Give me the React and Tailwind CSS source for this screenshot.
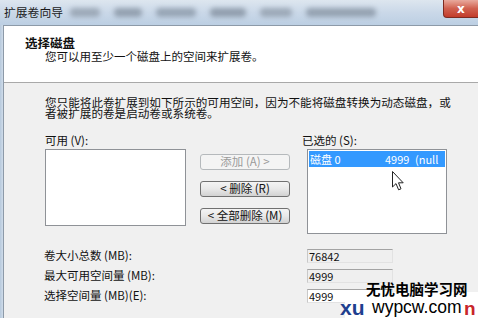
import React from "react";

const cjk = { fontFamily: '"Noto Sans CJK SC", "Noto Sans", sans-serif' };

function WinButton({ children, disabled }) {
  return (
    <div
      className={`h-[16px] w-[90px] flex items-center justify-center rounded-[3px] border text-[11.5px] leading-none ${
        disabled
          ? "border-[#b5b9bc] bg-[#f4f4f4] text-[#9a9a9a]"
          : "border-[#707070] bg-gradient-to-b from-[#f4f4f4] via-[#e8e8e8] to-[#d2d2d2] text-[#111]"
      }`}
    >
      {children}
    </div>
  );
}

function ReadBox({ value, editable }) {
  return (
    <div
      className={`h-[14px] w-[86px] border border-t-[#a3a3a3] border-l-[#c8c8c8] border-r-[#e2e2e2] border-b-[#e2e2e2] pl-[1px] text-[11px] leading-[12px] text-[#111] ${
        editable ? "bg-white" : "bg-[#efefef]"
      }`}
    >
      {value}
    </div>
  );
}

function Cursor() {
  return (
    <svg
      className="absolute left-[392px] top-[171px]"
      width="13"
      height="20"
      viewBox="0 0 13 20"
    >
      <path
        d="M0.5 0.5 L0.5 16 L4 12.6 L6.6 18.8 L9 17.8 L6.5 11.8 L11.2 11.8 Z"
        fill="white"
        stroke="#222"
        strokeWidth="1"
        strokeLinejoin="round"
      />
    </svg>
  );
}

export default function App() {
  return (
    <div
      className="relative w-[478px] h-[318px] overflow-hidden bg-[#c3d4e6] text-[#111]"
      style={cjk}
    >
      {/* title bar */}
      <div className="relative h-[25px] bg-gradient-to-b from-[#dde6ef] via-[#cad8e8] to-[#bccfe3] overflow-hidden">
        <div className="absolute left-[70px] top-[8px] h-[9px] w-[360px] flex gap-[14px] blur-[2.5px] opacity-70">
          <div className="h-full w-[30px] bg-[#8a96a4] rounded" />
          <div className="h-full w-[28px] bg-[#7d8a99] rounded" />
          <div className="h-full w-[40px] bg-[#8290a0] rounded" />
          <div className="h-full w-[36px] bg-[#7a8796] rounded" />
          <div className="h-full w-[32px] bg-[#8a96a4] rounded" />
          <div className="h-full w-[70px] bg-[#7f8c9b] rounded" />
        </div>
        <div className="absolute left-[4px] top-[4px] text-[11.8px] leading-[16px] text-[#1b1b1b]">
          扩展卷向导
        </div>
        <div className="absolute left-[443px] top-0 h-[18px] w-[40px] rounded-bl-[4px] border border-t-0 border-[#7d2a20] bg-gradient-to-b from-[#e8a99d] via-[#d0604f] to-[#c23b2a] flex items-center pl-[13px]">
          <span className="text-white font-bold text-[12px] leading-none" style={{ fontFamily: '"DejaVu Sans", sans-serif' }}>
            x
          </span>
        </div>
      </div>

      {/* window body */}
      <div className="flex h-[293px]">
        <div className="w-[3px] bg-gradient-to-r from-[#b7c9dc] to-[#cfdcea]" />
        <div className="flex-1 flex flex-col border-l border-t border-[#8d9aa8] bg-[#f0f0f0]">
          {/* header */}
          <div className="h-[57px] bg-white border-b border-[#a9a9a9] pt-[10px]">
            <div className="pl-[21px] text-[12.5px] leading-[14px] font-bold">选择磁盘</div>
            <div className="pl-[41px] text-[11.5px] leading-[12px]">
              您可以用至少一个磁盘上的空间来扩展卷。
            </div>
          </div>

          {/* paragraph */}
          <div className="pt-[14px] pl-[41px] text-[11.6px] leading-[11px] whitespace-nowrap">
            <div>您只能将此卷扩展到如下所示的可用空间，因为不能将磁盘转换为动态磁盘，或</div>
            <div>者被扩展的卷是启动卷或系统卷。</div>
          </div>

          {/* lists */}
          <div className="flex mt-[14px] pl-[41px] text-[11.5px]">
            <div className="flex flex-col">
              <div className="h-[14px] leading-[14px]">可用 (V):</div>
              <div className="mt-[2px] h-[77px] w-[141px] border border-[#8f9297] bg-white" />
            </div>
            <div className="ml-[14px] pt-[21px] flex flex-col gap-[11px]">
              <WinButton disabled>添加 (A) &gt;</WinButton>
              <WinButton>&lt; 删除 (R)</WinButton>
              <WinButton>&lt; 全部删除 (M)</WinButton>
            </div>
            <div className="ml-[12px] flex flex-col">
              <div className="h-[14px] leading-[14px]">已选的 (S):</div>
              <div className="ml-[5px] mt-[2px] h-[85px] w-[140px] border border-[#8f9297] bg-white p-[1px]">
                <div className="h-[16px] bg-[#3399ff] text-white flex items-center text-[11px] leading-none">
                  <span className="w-[76px] pl-[1px]">磁盘 0</span>
                  <span className="w-[30px]">4999</span>
                  <span>(null</span>
                </div>
              </div>
            </div>
          </div>

          {/* sizes */}
          <div className="mt-[12px] pl-[40px] flex flex-col text-[11.5px]">
            <div className="h-[20px] flex items-center">
              <div className="w-[263px]">卷大小总数 (MB):</div>
              <ReadBox value="76842" />
            </div>
            <div className="h-[20px] flex items-center">
              <div className="w-[263px]">最大可用空间量 (MB):</div>
              <ReadBox value="4999" />
            </div>
            <div className="h-[20px] flex items-center">
              <div className="w-[263px]">选择空间量 (MB)(E):</div>
              <ReadBox value="4999" editable />
            </div>
          </div>
        </div>
      </div>

      <Cursor />

      {/* watermark */}
      <div className="absolute left-[345px] top-[292px] h-[26px] w-[133px] bg-white" />
      <div className="absolute left-[366px] top-[281px] text-[14.5px] leading-[16px] font-bold text-black whitespace-nowrap">
        无忧电脑学习网
      </div>
      <div
        className="absolute left-[340px] top-[298px] text-[21px] leading-[20px] font-bold text-[#1f3f8f] whitespace-nowrap"
        style={{ fontFamily: '"Liberation Sans", sans-serif' }}
      >
        xu
      </div>
      <div
        className="absolute left-[464px] top-[299px] text-[19px] leading-[19px] font-bold text-[#c8262b] whitespace-nowrap"
        style={{ fontFamily: '"Liberation Sans", sans-serif' }}
      >
        n
      </div>
      <div
        className="absolute left-[372px] top-[298px] text-[17.5px] leading-[18px] text-black whitespace-nowrap"
        style={{ fontFamily: '"Liberation Sans", sans-serif' }}
      >
        wypcw.com
      </div>
    </div>
  );
}
